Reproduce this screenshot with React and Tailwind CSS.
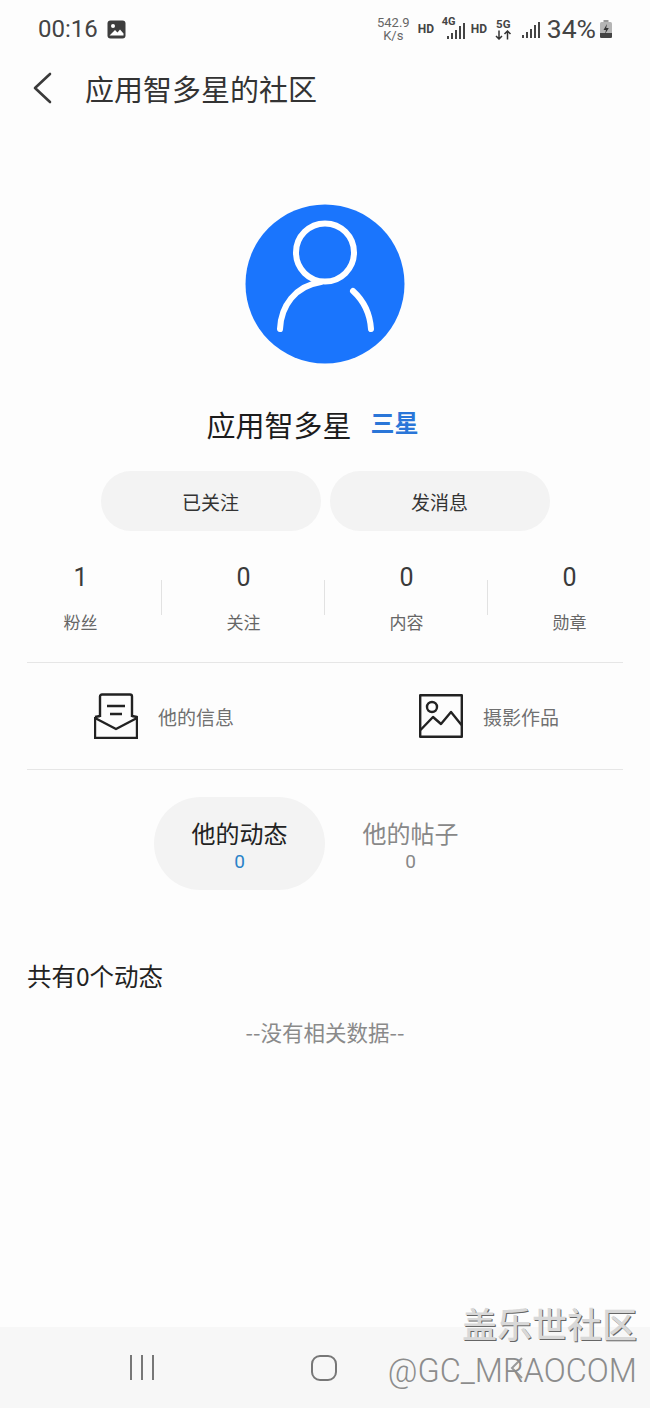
const cjk = { fontFamily: '"Noto Sans CJK SC","Noto Sans",sans-serif' };
const roboto = { fontFamily: 'Roboto,"Noto Sans",sans-serif' };

function Signal({ className }) {
  return (
    <svg className={className} width="20" height="18" viewBox="0 0 20 18" fill="#444">
      <rect x="1" y="14" width="2" height="3" />
      <rect x="5" y="11" width="2" height="6" />
      <rect x="9" y="8" width="2" height="9" />
      <rect x="13" y="4" width="2" height="13" />
      <rect x="17" y="1" width="2" height="16" />
    </svg>
  );
}

function StatusBar() {
  return (
    <div className="h-[58px] flex items-center pl-[38px] pr-[38px] text-[#444]" style={roboto}>
      <span className="text-[24px] leading-none">00:16</span>
      <svg className="ml-[9px]" width="19" height="19" viewBox="0 0 19 19">
        <rect x="0.5" y="0.5" width="18" height="18" rx="3" fill="#3d3d3d" />
        <circle cx="6" cy="6" r="2" fill="#fff" />
        <path d="M2.5 15.5 L8 10 L10.5 12.5 L13 9.5 L16.5 13.5 V15.5 Z" fill="#fff" />
      </svg>
      <div className="ml-auto flex items-center">
        <div className="flex flex-col items-center text-[13px] leading-[13px] text-[#666] w-[33px] -ml-[1px]">
          <span>542.9</span>
          <span>K/s</span>
        </div>
        <span className="ml-[8px] w-[17px] text-[12px] font-bold">HD</span>
        <div className="relative ml-[7px] w-[24px] h-[26px]">
          <span className="absolute left-0 top-0 text-[11px] leading-[11px] font-bold">4G</span>
          <Signal className="absolute left-[4px] top-[6px]" />
        </div>
        <span className="ml-[5px] w-[17px] text-[12px] font-bold">HD</span>
        <div className="ml-[7px] w-[17px] flex flex-col items-center">
          <span className="text-[11.5px] leading-[12px] font-bold">5G</span>
          <svg width="17" height="10" viewBox="0 0 17 10" fill="none" stroke="#333" strokeWidth="1.5">
            <path d="M4 0.5V9M1 6l3 3 3-3M12.5 9.5V1M9.5 4l3-3 3 3" />
          </svg>
        </div>
        <Signal className="ml-[9px] mt-[1px]" />
        <span className="ml-[6px] text-[26.5px] leading-none">34%</span>
        <svg className="ml-[4px]" width="12" height="18" viewBox="0 0 12 18">
          <rect x="3.5" y="0" width="5" height="2" fill="#999" />
          <rect x="0" y="2" width="12" height="16" rx="1.5" fill="#b5b5b5" />
          <path d="M0 13H12V16.5A1.5 1.5 0 0 1 10.5 18H1.5A1.5 1.5 0 0 1 0 16.5Z" fill="#444" />
          <path d="M7 4L3.5 10H6L5 14L8.8 8H6.2Z" fill="#333" />
        </svg>
      </div>
    </div>
  );
}

function Header() {
  return (
    <div className="h-[60px] flex items-center pl-[32px]">
      <svg width="22" height="32" viewBox="0 0 22 32" fill="none" stroke="#3a3a3a" strokeWidth="2.6" strokeLinecap="round" strokeLinejoin="round">
        <path d="M18 2 L3 16 L18 30" />
      </svg>
      <h1 className="ml-[31px] text-[29px] leading-none text-[#333] font-normal" style={cjk}>应用智多星的社区</h1>
    </div>
  );
}

function Avatar() {
  return (
    <svg width="160" height="160" viewBox="0 0 160 160" className="block">
      <circle cx="80" cy="80" r="79.5" fill="#1a75fd" />
      <g fill="none" stroke="#fff" strokeWidth="6" strokeLinecap="round">
        <circle cx="80" cy="48.5" r="29" />
        <path d="M35 125 C36 102 50 82 76 78" />
        <path d="M108 87 C119 97 125 110 126 125" />
      </g>
    </svg>
  );
}

function Stat({ value, label, divider }) {
  return (
    <div className="relative flex-1 flex flex-col items-center">
      <span className="text-[25px] leading-[30px] text-[#3a3a3a]" style={roboto}>{value}</span>
      <span className="mt-[17px] text-[17px] leading-[24px] text-[#666]" style={cjk}>{label}</span>
      {divider && <div className="absolute right-0 top-[17px] h-[35px] w-px bg-[#e2e2e2]" />}
    </div>
  );
}

function MailIcon() {
  return (
    <svg width="44" height="46" viewBox="0 0 44 46" fill="none" stroke="#222" strokeWidth="2.4" strokeLinejoin="round">
      <path d="M6 24 V3.5 A2 2 0 0 1 8 1.5 H36 A2 2 0 0 1 38 3.5 V24" />
      <path d="M1 24 V45 H43 V24 L38 23 M1 24 L6 23" />
      <path d="M1 25 L22 36 L43 25" />
      <path d="M13 13 H31 M16 21 H28" />
    </svg>
  );
}

function PictureIcon() {
  return (
    <svg width="44" height="44" viewBox="0 0 44 44" fill="none" stroke="#222" strokeWidth="2.4" strokeLinejoin="round">
      <rect x="1.2" y="1.2" width="41.6" height="41.6" />
      <circle cx="13" cy="13" r="5" />
      <path d="M1.5 36 L14 23 L22 30 L32 18 L42.5 31" />
    </svg>
  );
}

export default function App() {
  return (
    <div className="relative w-[650px] h-[1408px] bg-[#fdfdfd] overflow-hidden flex flex-col" style={cjk}>
      <StatusBar />
      <Header />
      <div className="mt-[86px] flex justify-center"><Avatar /></div>
      <div className="mt-[42px] h-[36px] flex items-center justify-center pr-[26px]">
        <span className="text-[29px] leading-none text-[#1c1c1c] ml-[1px]">应用智多星</span>
        <span className="ml-[19px] text-[24px] leading-none font-bold text-[#2a76d8] relative -top-[2px]">三星</span>
      </div>
      <div className="mt-[29px] flex justify-center gap-[9px]">
        <button className="w-[220px] h-[60px] rounded-full bg-[#f3f3f3] text-[19px] text-[#333] pt-[2px]">已关注</button>
        <button className="w-[220px] h-[60px] rounded-full bg-[#f3f3f3] text-[19px] text-[#333] pt-[2px]">发消息</button>
      </div>
      <div className="mt-[32px] mx-[-1px] flex">
        <Stat value="1" label="粉丝" divider />
        <Stat value="0" label="关注" divider />
        <Stat value="0" label="内容" divider />
        <Stat value="0" label="勋章" />
      </div>
      <div className="mt-[28px] mx-[27px] border-y border-[#e6e6e6] h-[108px] flex items-center">
        <div className="flex items-center ml-[67px]">
          <MailIcon />
          <span className="ml-[20px] mt-[2px] text-[19px] text-[#707070]">他的信息</span>
        </div>
        <div className="flex items-center ml-[185px]">
          <PictureIcon />
          <span className="ml-[20px] mt-[2px] text-[19px] text-[#707070]">摄影作品</span>
        </div>
      </div>
      <div className="mt-[27px] flex justify-center">
        <div className="w-[171px] h-[93px] rounded-full bg-[#f3f3f3] flex flex-col items-center pt-[20px]">
          <span className="text-[24px] leading-[32px] text-[#222]">他的动态</span>
          <span className="text-[19px] leading-[26px] text-[#2a82c8]" style={roboto}>0</span>
        </div>
        <div className="w-[171px] h-[93px] flex flex-col items-center pt-[20px]">
          <span className="text-[24px] leading-[32px] text-[#888]">他的帖子</span>
          <span className="text-[19px] leading-[26px] text-[#888]" style={roboto}>0</span>
        </div>
      </div>
      <div className="mt-[70px] pl-[27px] text-[24.5px] leading-[32px] text-[#222]">共有0个动态</div>
      <div className="mt-[25px] text-center text-[21.5px] leading-[30px] text-[#8a8a8a]">--没有相关数据--</div>
      <div className="mt-auto h-[81px] bg-[#f7f7f7] flex items-center">
        <div className="ml-[130px] flex gap-[9px]">
          <div className="w-[2px] h-[25px] bg-[#777]" />
          <div className="w-[2px] h-[25px] bg-[#777]" />
          <div className="w-[2px] h-[25px] bg-[#777]" />
        </div>
        <div className="ml-[157px] w-[26px] h-[26px] rounded-[9px] border-2 border-[#777]" />
        <svg className="ml-[173px]" width="14" height="26" viewBox="0 0 14 26" fill="none" stroke="#999" strokeWidth="2">
          <path d="M12 3 L2 13 L12 23" />
        </svg>
      </div>
      <div className="absolute right-[13px] top-[1302px] flex flex-col items-end text-[#8c8c8c]">
        <span className="text-[35px] leading-[42px] font-medium" style={{ ...cjk, textShadow: '1px 1px 0 #666', color: '#d8d8d8' }}>盖乐世社区</span>
        <span className="mt-[9px] text-[32.5px] leading-[36px] font-light" style={roboto}>@GC_MRAOCOM</span>
      </div>
    </div>
  );
}
